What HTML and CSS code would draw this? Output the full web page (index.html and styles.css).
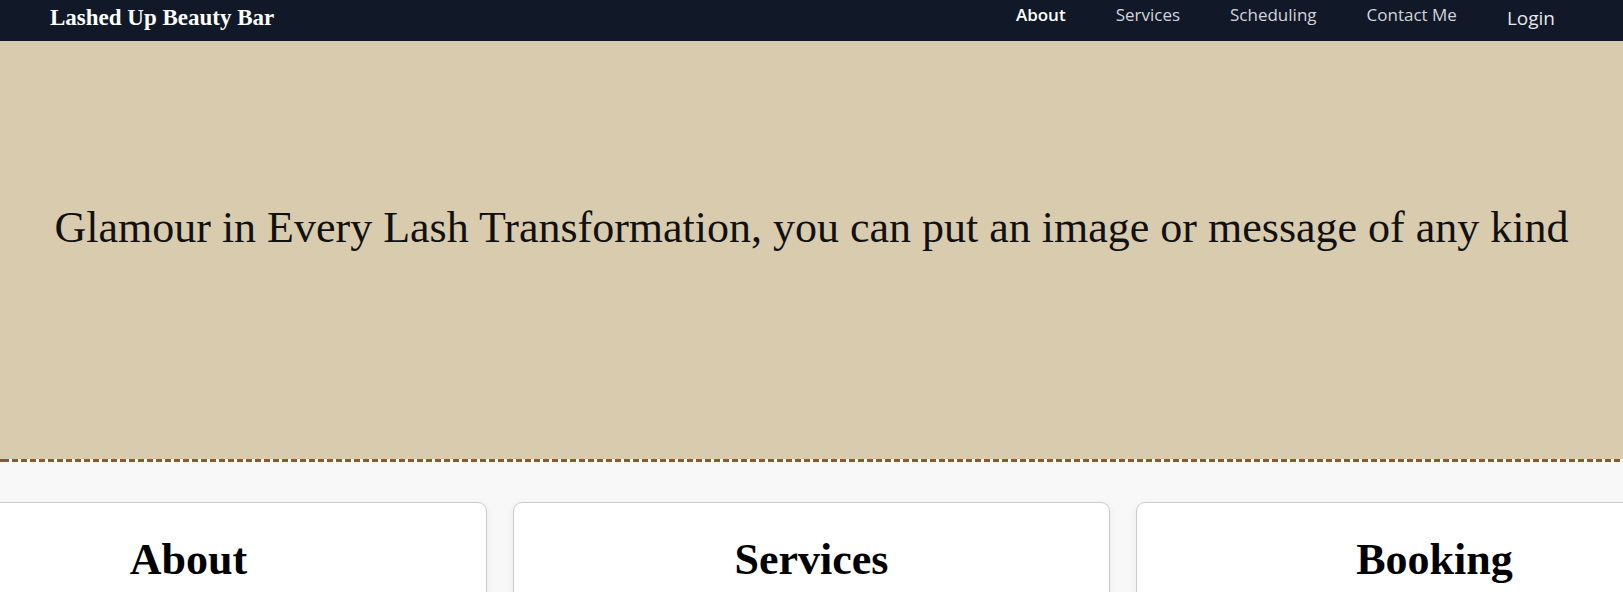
FILE: index.html
```html
<!DOCTYPE html>
<html lang="en">
<head>
<meta charset="utf-8">
<title>Lashed Up Beauty Bar</title>
<link rel="stylesheet" href="styles.css">
</head>
<body>
<header class="navbar">
  <a class="brand" href="#">Lashed Up Beauty Bar</a>
  <nav class="links">
    <a class="link active" href="#">About</a>
    <a class="link" href="#">Services</a>
    <a class="link" href="#">Scheduling</a>
    <a class="link" href="#">Contact Me</a>
    <a class="link login" href="#">Login</a>
  </nav>
</header>
<section class="hero">
  <h1 class="hero-text">Glamour in Every Lash Transformation, you can put an image or message of any kind</h1>
</section>
<div class="divider"></div>
<main class="content">
  <div class="cards">
    <div class="card"><h2 class="card-title">About</h2></div>
    <div class="card"><h2 class="card-title">Services</h2></div>
    <div class="card"><h2 class="card-title">Booking</h2></div>
  </div>
</main>
</body>
</html>
```

FILE: styles.css
```css
html, body {
  margin: 0;
  padding: 0;
}
body {
  background: #f8f8f8;
  overflow: hidden;
  font-family: "Liberation Serif", serif;
}
.navbar {
  height: 41px;
  background: #111827;
  display: flex;
  align-items: center;
  justify-content: space-between;
  padding: 0 68px 0 50px;
}
.brand {
  color: #ffffff;
  text-decoration: none;
  font-family: "Liberation Serif", serif;
  font-weight: bold;
  font-size: 23px;
  margin-top: -6px;
}
.links {
  display: flex;
  align-items: center;
  gap: 50px;
}
.link {
  font-family: "Open Sans", sans-serif;
  font-size: 17px;
  color: #d1d5db;
  text-decoration: none;
  margin-top: -12px;
}
.link.active {
  color: #ffffff;
  font-weight: 600;
}
.link.login {
  font-size: 19px;
  color: #e5e7eb;
  margin-top: -6px;
}
.hero {
  height: 418px;
  background: #d9cbad;
  display: flex;
  align-items: center;
  justify-content: center;
  padding-bottom: 46px;
  box-sizing: border-box;
}
.divider {
  height: 3px;
  background: repeating-linear-gradient(90deg, #8b5a2b 0 6px, transparent 6px 9px);
  background-position: 3px 0;
}
.hero-text {
  margin: 0;
  font-family: "Liberation Serif", serif;
  font-weight: normal;
  font-size: 44px;
  color: #111111;
  white-space: nowrap;
}
.content {
  padding-top: 40px;
}
.cards {
  display: flex;
  justify-content: center;
  gap: 26px;
}
.card {
  flex: 0 0 597px;
  height: 300px;
  background: #ffffff;
  border: 1px solid #cccccc;
  border-radius: 9px;
  box-shadow: 0 2px 8px rgba(0, 0, 0, 0.06);
  box-sizing: border-box;
  text-align: center;
}
.card-title {
  margin: 31px 0 0;
  font-family: "Liberation Serif", serif;
  font-weight: bold;
  font-size: 44px;
  color: #000000;
}
```
